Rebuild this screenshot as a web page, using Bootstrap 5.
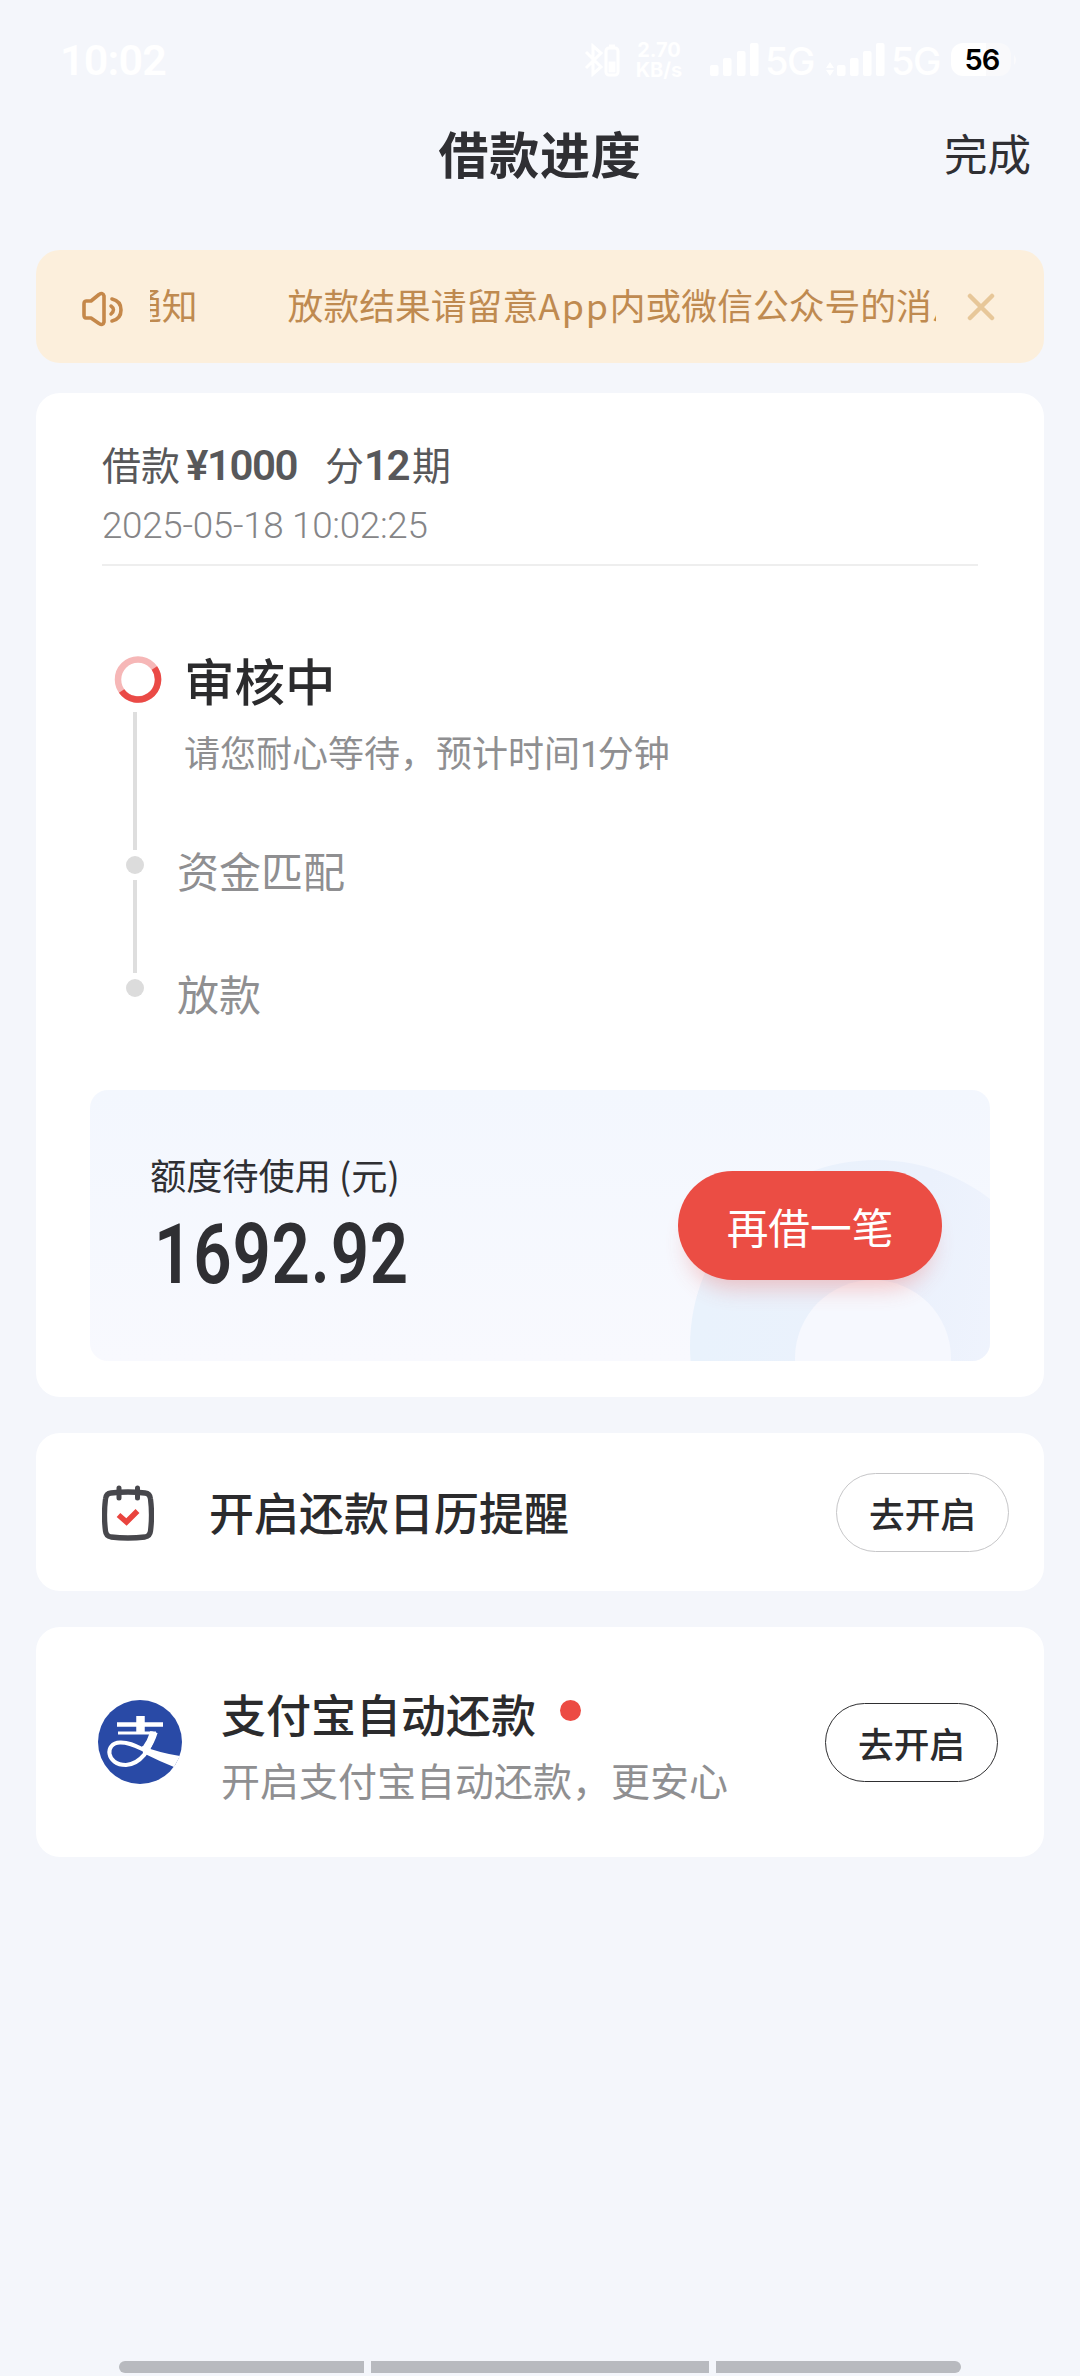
<!DOCTYPE html>
<html lang="zh-CN">
<head>
<meta charset="utf-8">
<meta name="viewport" content="width=device-width, initial-scale=1">
<title>借款进度</title>
<link href="https://cdn.jsdelivr.net/npm/bootstrap@5.3.0/dist/css/bootstrap.min.css" rel="stylesheet">
<style>
  body { width:1080px; height:2376px; background:#f4f6fb; color:#2f2f33; font-family:"Noto Sans CJK SC",sans-serif; overflow:hidden; }
  svg { display:block; flex:none; }
  .num { font-family:Roboto,sans-serif; }
  .statusbar { height:119px; padding-left:60px; padding-right:62px; color:#fff; }
  .clock { font:600 43px/1 Roboto,sans-serif; letter-spacing:-.8px; padding-top:2px; }
  .rate { font:700 20px/20px Inter,sans-serif; width:50px; margin-left:13px; }
  .fiveg { font:500 38px/1 Inter,sans-serif; letter-spacing:-1.5px; width:54px; margin-left:6px; padding-top:2px; }
  .fiveg.first-sim { margin-right:7px; }
  .power { width:60px; height:33px; border-radius:12px; background:linear-gradient(90deg,#fff 58%,#f9f9fb 58%); color:#000; font:600 29px/33px Inter,sans-serif; letter-spacing:-1px; margin-left:6px; padding-left:2px; }
  .titlebar { height:66px; }
  .page-title { font-size:50px; font-weight:700; line-height:66px; letter-spacing:.8px; }
  .done { font-size:43.5px; line-height:68px; right:49px; top:0; }
  .stack { padding:65px 36px 0; }
  .notice { height:113px; border-radius:24px; background:#fcefdc; color:#bf8a50; padding-left:45px; padding-right:49px; }
  .ticker { width:786px; margin-left:25px; height:56px; font-size:35.8px; line-height:52px; margin-top:-2px; }
  .ticker-run { margin-left:-24px; }
  .ticker-run .first { margin-right:90px; }
  .ticker-run .latin { letter-spacing:1.8px; }
  .panel { background:#fff; border-radius:24px; }
  .panel-loan { height:1004px; margin-top:30px; padding-top:48px; }
  .loan-line { height:44px; line-height:44px; font-size:39px; color:#58585a; margin-left:66px; }
  .loan-line .num { font-size:42px; font-weight:600; letter-spacing:-1.5px; line-height:50px; }
  .loan-date { height:40px; line-height:43px; margin:19px 0 20px 66px; font-size:36.8px; font-weight:300; letter-spacing:-.3px; color:#858587; }
  .rule { height:2px; background:#eee; margin:0 66px; }
  .steps { height:434px; margin-top:90px; padding-left:78px; }
  .rail { width:48px; }
  .rail .bar { width:4px; margin-left:19px; background:#dedede; }
  .rail .pt { width:18px; height:18px; border-radius:50%; margin-left:12px; background:#dcdcdc; }
  .step-text { margin-top:-3px; padding-left:15px; color:#8f8f91; }
  .s-now { font-size:50.5px; line-height:52px; font-weight:500; color:#2b2b2d; margin-left:7px; }
  .s-sub { font-size:36px; line-height:40px; margin:26px 0 0 7px; }
  .s-sub .num { font-weight:400; font-size:36px; letter-spacing:-2.5px; }
  .s-next { font-size:42px; line-height:46px; }
  .quota { height:271px; margin:0 54px; border-radius:18px; background:linear-gradient(#f3f7fe,#f8f9fe); overflow:hidden; }
  .quota-art { right:0; bottom:0; }
  .quota-text { padding:64px 0 0 60px; }
  .q-label { font-size:36.2px; line-height:40px; }
  .q-num { font-size:84px; font-weight:600; line-height:64px; margin:29px 0 0 4px; letter-spacing:1px; transform:scaleX(.8); transform-origin:0 50%; }
  .btn-again { width:264px; height:109px; margin:81px 48px 0 0; border:0; border-radius:55px; background:#eb4d44; color:#fff; font-size:41.7px; line-height:111px; padding:0; box-shadow:0 18px 22px -10px rgba(235,77,68,.3); }
  .panel-row { margin-top:36px; }
  .h-cal { height:158px; padding:0 35px 0 66px; }
  .h-pay { height:230px; padding:0 46px 0 62px; }
  .row-title { font-size:45px; font-weight:500; line-height:50px; color:#2b2b2d; }
  .row-sub { font-size:39px; line-height:44px; color:#8f8f91; margin-top:18px; }
  .red-dot { width:21px; height:21px; border-radius:50%; background:#ec4b43; margin-left:24px; margin-top:-7px; }
  .btn-go { width:173px; height:79px; border:1.5px solid #c6c6c8; border-radius:40px; background:#fff; color:#2b2b2d; font-size:35.7px; font-weight:500; line-height:78px; padding:0; }
  .btn-go.dark { border-color:#2f2f31; }
  .homebar { left:119px; bottom:3px; width:842px; height:12px; gap:7px; border-radius:6px; overflow:hidden; }
  .homebar span { background:#b8babf; }
</style>
</head>
<body>
<div class="statusbar d-flex align-items-center">
  <span class="clock me-auto">10:02</span>
  <svg width="37" height="34" viewBox="0 0 37 34" fill="none" stroke="#fff" stroke-width="3"><path d="M2 9l15 15-8 7V3l8 7L2 25"/><rect x="22" y="5" width="12" height="27" rx="3"/><path d="M25 3h6"/><path d="M24.500 24h7" stroke-width="11"/></svg>
  <div class="rate text-center">2.70<br>KB/s</div>
  <svg style="margin-left:26px" width="49" height="33" viewBox="0 0 49 33" fill="#fff"><rect y="22" width="8.500" height="11" rx="2"/><rect x="13" y="15" width="8.500" height="18" rx="2"/><rect x="27" y="8" width="8.500" height="25" rx="2"/><rect x="40" width="8.500" height="33" rx="2"/></svg>
  <span class="fiveg first-sim">5G</span>
  <svg width="59" height="33" viewBox="0 0 59 33" fill="#fff"><path d="M0 25l4-6 4 6zM0 27h8l-4 6z"/><rect x="11" y="22" width="8.500" height="11" rx="2"/><rect x="24" y="15" width="8.500" height="18" rx="2"/><rect x="37" y="8" width="8.500" height="25" rx="2"/><rect x="50" width="8.500" height="33" rx="2"/></svg>
  <span class="fiveg">5G</span>
  <span class="power text-center">56</span>
  <svg width="7" height="14" viewBox="0 0 7 14"><path d="M3 2q4 5 0 10z" fill="#fafafc"/></svg>
</div>

<header class="titlebar position-relative text-center">
  <h1 class="page-title m-0">借款进度</h1>
  <span class="done position-absolute">完成</span>
</header>

<main class="stack">
  <div class="notice d-flex align-items-center">
    <svg width="44" height="38" viewBox="0 0 44 38" style="margin-top:4px" fill="none" stroke="#c5884a" stroke-width="3.600" stroke-linecap="round" stroke-linejoin="round"><path d="M5 11H10L18 4.500Q22 2 23 6V32Q22 36 18 33.500L10 28H5Q3 28 3 25V14Q3 11 5 11z"/><path d="M31 9Q40 11 40 20T31 31"/><path d="M30 16q5 3.500 0 8" stroke-width="3.500"/></svg>
    <div class="ticker overflow-hidden text-nowrap"><div class="ticker-run"><span class="first">通知</span><span>放款结果请留意<span class="latin">App</span>内或微信公众号的消息</span></div></div>
    <svg class="ms-auto" width="28" height="28" viewBox="0 0 28 28" stroke="#e7c799" stroke-width="4.500" stroke-linecap="round"><path d="M3 3L25 25M25 3L3 25"/></svg>
  </div>

  <section class="panel panel-loan">
    <div class="loan-line d-flex"><span>借款</span><span class="num" style="margin-left:6px">¥1000</span><span style="margin-left:28px">分</span><span class="num">12</span><span style="margin-left:3px">期</span></div>
    <div class="loan-date num">2025-05-18 10:02:25</div>
    <div class="rule"></div>
    <div class="steps d-flex">
      <div class="rail">
        <svg width="48" height="47" viewBox="0 0 48 47" fill="none" stroke-width="6.500"><circle cx="24" cy="23.500" r="20" stroke="#f6b7b7"/><path d="M40.400 12A20 20 0 0 1 7.600 35" stroke="#ea4a46"/></svg>
        <div class="bar" style="height:138px;margin-top:9px"></div>
        <div class="pt" style="margin-top:6px"></div>
        <div class="bar" style="height:93px;margin-top:6px"></div>
        <div class="pt" style="margin-top:6px"></div>
      </div>
      <div class="step-text">
        <div class="s-now">审核中</div>
        <div class="s-sub">请您耐心等待，预计时间<span class="num">1</span>分钟</div>
        <div class="s-next" style="margin-top:72px">资金匹配</div>
        <div class="s-next" style="margin-top:77px">放款</div>
      </div>
    </div>
    <div class="quota position-relative">
      <svg class="quota-art position-absolute" width="310" height="271" viewBox="0 0 310 271">
        <defs><linearGradient id="arc" x1="0" y1=".6" x2="1" y2=".75"><stop offset="0" stop-color="#e9f2fc"/><stop offset=".55" stop-color="#ebf1fc"/><stop offset="1" stop-color="#f2f5fe"/></linearGradient></defs>
        <circle cx="196" cy="256" r="186" fill="url(#arc)"/><circle cx="193" cy="268" r="78" fill="#f6f8fe"/>
      </svg>
      <div class="d-flex justify-content-between position-relative">
        <div class="quota-text">
          <div class="q-label">额度待使用 (元)</div>
          <div class="q-num num">1692.92</div>
        </div>
        <button class="btn btn-again">再借一笔</button>
      </div>
    </div>
  </section>

  <section class="panel panel-row h-cal d-flex align-items-center">
    <svg width="52" height="56" viewBox="0 0 52 56" style="margin-top:2px" fill="none" stroke-linecap="round"><path d="M9 8Q26 6 43 8Q48 8.500 48.500 14Q50.500 30 48.500 46Q48 51 43 52Q26 54 9 52Q4 51 3.500 46Q1.500 30 3.500 14Q4 8.500 9 8z" stroke="#47474c" stroke-width="5.300"/><path d="M17 3v10M35.500 3v10" stroke="#47474c" stroke-width="5"/><path d="M16.500 30l8 7L35.500 26" stroke="#e9443e" stroke-width="5.500" stroke-linecap="butt"/></svg>
    <span class="row-title" style="margin-left:55px">开启还款日历提醒</span>
    <button class="btn btn-go ms-auto">去开启</button>
  </section>

  <section class="panel panel-row h-pay d-flex align-items-center">
    <svg width="84" height="84" viewBox="0 0 84 84"><circle cx="42" cy="42" r="42" fill="#294aa6"/><g fill="none" stroke="#fff"><path d="M19 24.500h46" stroke-width="4.500"/><path d="M20 33h38" stroke-width="3"/><path d="M42.500 16v17" stroke-width="8.500"/><path d="M56 32C53 50 42 64 28 65C8 65 6 43 22 42.500C35 42 43 50 56 54" stroke-width="4"/><path d="M56 32Q53 42 47 50" stroke-width="7.500"/></g><path d="M44 46Q62 53 82 56L76 67Q61 61 45 53z" fill="#fff"/></svg>
    <div style="margin-left:39px;margin-top:5px">
      <div class="d-flex align-items-center"><span class="row-title">支付宝自动还款</span><span class="red-dot"></span></div>
      <div class="row-sub">开启支付宝自动还款，更安心</div>
    </div>
    <button class="btn btn-go dark ms-auto">去开启</button>
  </section>
</main>

<div class="homebar position-absolute d-flex"><span style="width:245px"></span><span style="width:338px"></span><span style="width:245px"></span></div>
<script src="https://cdn.jsdelivr.net/npm/bootstrap@5.3.0/dist/js/bootstrap.bundle.min.js"></script>
</body>
</html>
